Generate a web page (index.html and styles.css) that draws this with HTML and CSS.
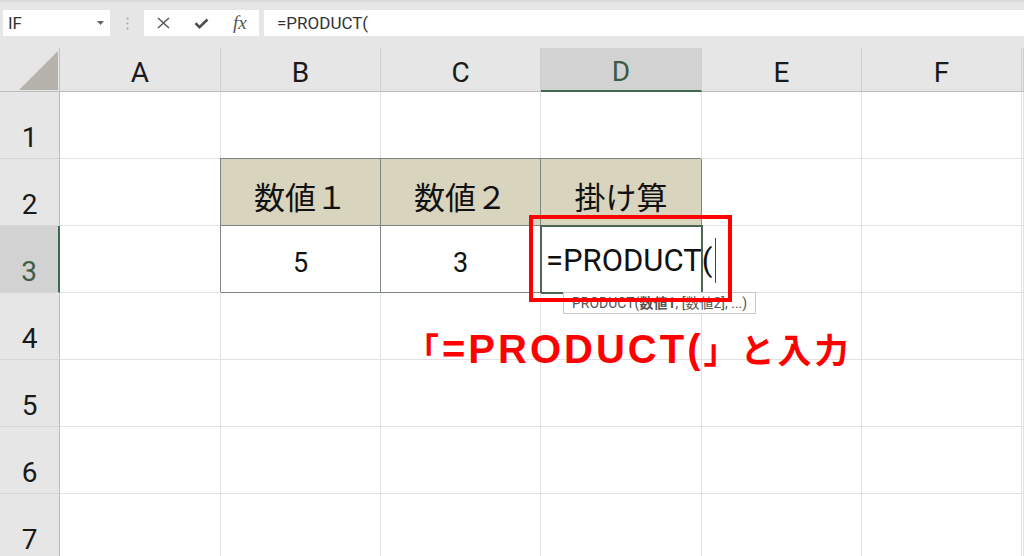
FILE: index.html
```html
<!DOCTYPE html>
<html lang="ja">
<head>
    <meta charset="UTF-8">
    <meta name="viewport" content="width=device-width, initial-scale=1.0">
    <title>PRODUCT</title>
    <link rel="stylesheet" href="styles.css">
</head>
<body>
    <div class="toolbar">
        <div class="name-box">
            <span>IF</span>
            <svg width="7" height="4" viewBox="0 0 7 4"><polygon points="0,0 7,0 3.5,4" fill="#666"/></svg>
        </div>
        <div class="grip">
            <svg width="3" height="13" viewBox="0 0 3 13">
                <circle cx="1.5" cy="1.5" r="1.1" fill="#a8a8a8"/>
                <circle cx="1.5" cy="6.5" r="1.1" fill="#a8a8a8"/>
                <circle cx="1.5" cy="11.5" r="1.1" fill="#a8a8a8"/>
            </svg>
        </div>
        <div class="fx-buttons">
            <span class="fx-btn">
                <svg width="13" height="12" viewBox="0 0 13 12"><path d="M1 1L12 11M12 1L1 11" stroke="#5a5a5a" stroke-width="1.6" fill="none"/></svg>
            </span>
            <span class="fx-btn">
                <svg width="15" height="11" viewBox="0 0 15 11"><path d="M1.5 5.2L5.5 9.2L13.5 1.5" stroke="#4f4f4f" stroke-width="2.6" fill="none"/></svg>
            </span>
            <span class="fx-btn fx">fx</span>
        </div>
        <div class="formula-input">=PRODUCT(</div>
    </div>

    <div class="sheet">
        <div class="grid">
            <div class="corner">
                <svg width="39" height="39" viewBox="0 0 39 39"><polygon points="0,39 39,0 39,39" fill="#b4b2ab"/></svg>
            </div>
            <div class="col-head">A</div>
            <div class="col-head">B</div>
            <div class="col-head">C</div>
            <div class="col-head selected">D</div>
            <div class="col-head">E</div>
            <div class="col-head">F</div>
            <div class="col-head"></div>

            <div class="row-head">1</div>
            <div class="cell"></div><div class="cell"></div><div class="cell"></div><div class="cell"></div><div class="cell"></div><div class="cell"></div><div class="cell"></div>

            <div class="row-head">2</div>
            <div class="cell"></div>
            <div class="cell tbl-head">数値１</div>
            <div class="cell tbl-head">数値２</div>
            <div class="cell tbl-head">掛け算</div>
            <div class="cell"></div><div class="cell"></div><div class="cell"></div>

            <div class="row-head selected">3</div>
            <div class="cell"></div>
            <div class="cell tbl">5</div>
            <div class="cell tbl">3</div>
            <div class="cell tbl active"><span class="edit-text">=PRODUCT(<span class="caret"></span></span></div>
            <div class="cell"></div><div class="cell"></div><div class="cell"></div>

            <div class="row-head">4</div>
            <div class="cell"></div><div class="cell"></div><div class="cell"></div><div class="cell"></div><div class="cell"></div><div class="cell"></div><div class="cell"></div>

            <div class="row-head">5</div>
            <div class="cell"></div><div class="cell"></div><div class="cell"></div><div class="cell"></div><div class="cell"></div><div class="cell"></div><div class="cell"></div>

            <div class="row-head">6</div>
            <div class="cell"></div><div class="cell"></div><div class="cell"></div><div class="cell"></div><div class="cell"></div><div class="cell"></div><div class="cell"></div>

            <div class="row-head">7</div>
            <div class="cell"></div><div class="cell"></div><div class="cell"></div><div class="cell"></div><div class="cell"></div><div class="cell"></div><div class="cell"></div>
        </div>

        <div class="tooltip">PRODUCT(<b>数値1</b>, [数値2], ...)</div>
        <div class="red-box"></div>
        <div class="note"><span class="note-cjk">「</span>=PRODUCT(<span class="note-cjk">」と入力</span></div>
    </div>
</body>
</html>
```

FILE: styles.css
```css
body {
    margin: 0;
    width: 1024px;
    height: 556px;
    overflow: hidden;
    background-color: #ffffff;
    font-family: Roboto, "Noto Sans CJK JP", sans-serif;
}
.toolbar {
    height: 48px;
    box-sizing: border-box;
    display: flex;
    align-items: flex-start;
    padding: 8px 0 0 3px;
    background: #e6e6e6;
    border-top: 2px solid #dadada;
}
.name-box {
    width: 107px;
    height: 26px;
    box-sizing: border-box;
    display: flex;
    align-items: center;
    justify-content: space-between;
    padding: 0 6px 0 5px;
    background: #ffffff;
    font-size: 17px;
    color: #333;
}
.grip {
    width: 34px;
    height: 26px;
    display: flex;
    align-items: center;
    justify-content: center;
}
.fx-buttons {
    width: 115px;
    height: 26px;
    display: flex;
    align-items: center;
    background: #ffffff;
}
.fx-btn {
    flex: 1;
    display: flex;
    justify-content: center;
    align-items: center;
}
.fx {
    font-family: "Liberation Serif", serif;
    font-style: italic;
    font-size: 19px;
    color: #555;
}
.formula-input {
    flex: 1;
    height: 26px;
    margin-left: 5px;
    padding-left: 13px;
    background: #ffffff;
    font-size: 17px;
    line-height: 26px;
    color: #333;
}
.sheet {
    position: relative;
    height: 508px;
    overflow: hidden;
}
.grid {
    display: grid;
    grid-template-columns: 60px 161px 160px 160px 161px 160px 160px 1fr;
    grid-template-rows: 44px repeat(7, 67px);
}
.corner {
    display: flex;
    justify-content: flex-end;
    align-items: flex-end;
    padding: 0 1px 1px 0;
    background: #e6e6e6;
    border-right: 1px solid #c4c4c4;
    border-bottom: 1px solid #bcbcbc;
}
.col-head {
    display: flex;
    align-items: center;
    justify-content: center;
    box-sizing: border-box;
    padding-top: 5px;
    background: #e6e6e6;
    border-right: 1px solid #cfcfcf;
    border-bottom: 1px solid #bcbcbc;
    font-size: 28px;
    color: #1a1a1a;
}
.col-head.selected {
    background: #d2d2d2;
    border-bottom: 2px solid #3f6a4d;
    color: #3b5a45;
}
.row-head {
    display: flex;
    align-items: flex-end;
    justify-content: center;
    box-sizing: border-box;
    padding-bottom: 6px;
    background: #e6e6e6;
    border-right: 1px solid #bcbcbc;
    border-bottom: 1px solid #d5d5d5;
    font-size: 28px;
    line-height: 28px;
    color: #1a1a1a;
}
.row-head.selected {
    background: #d2d2d2;
    border-right: 2px solid #3f6a4d;
    color: #3f5e49;
}
.cell {
    display: flex;
    align-items: center;
    justify-content: center;
    box-sizing: border-box;
    border-right: 1px solid #e1e1e1;
    border-bottom: 1px solid #e1e1e1;
    color: #111;
}
.tbl-head {
    padding-top: 6px;
    background: #d9d4bd;
    border-color: #7d867e;
    box-shadow: -1px -1px 0 #7d867e;
    font-family: "Noto Sans CJK JP", sans-serif;
    font-size: 31px;
}
.tbl {
    padding-top: 8px;
    border-color: #7d867e;
    box-shadow: -1px -1px 0 #7d867e;
    font-size: 27px;
}
.tbl.active {
    justify-content: flex-start;
    align-items: flex-end;
    padding: 0 0 9px 5px;
    outline: 2px solid #4b6752;
    outline-offset: -1px;
}
.edit-text {
    white-space: nowrap;
    font-size: 31px;
    line-height: 31px;
}
.caret {
    display: inline-block;
    width: 1px;
    height: 45px;
    margin-left: 3px;
    vertical-align: -12px;
    background: #444;
}
.tooltip {
    position: absolute;
    left: 563px;
    top: 244px;
    height: 22px;
    box-sizing: border-box;
    padding: 0 8px;
    background: #ffffff;
    border: 1px solid #c8c8c8;
    font-size: 14px;
    line-height: 20px;
    color: #555;
    white-space: nowrap;
}
.red-box {
    position: absolute;
    left: 529px;
    top: 167px;
    width: 203px;
    height: 87px;
    box-sizing: border-box;
    border: 4px solid #ff0000;
}
.note {
    position: absolute;
    left: 405px;
    top: 281px;
    font-family: "Liberation Sans", "Noto Sans CJK JP", sans-serif;
    font-weight: bold;
    font-size: 40px;
    line-height: 40px;
    letter-spacing: 3px;
    color: #ff0000;
    white-space: nowrap;
}
.note-cjk {
    font-family: "Noto Sans CJK JP", sans-serif;
    font-size: 34px;
}
```
